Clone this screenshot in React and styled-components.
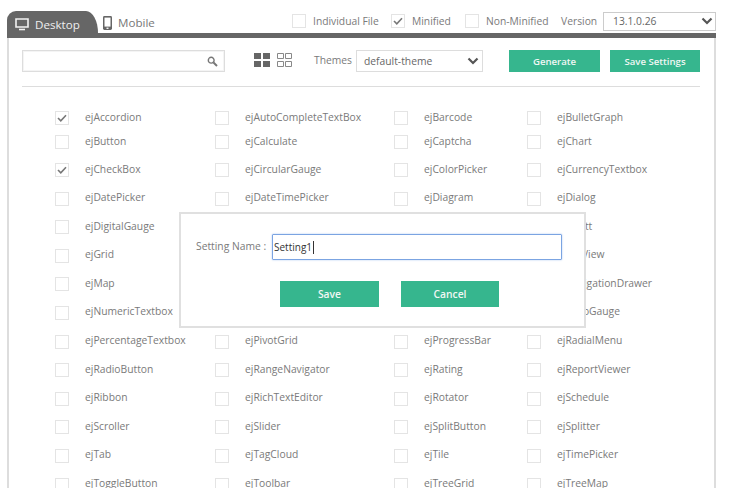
import React from "react";
import styled, { createGlobalStyle } from "styled-components";

const Global = createGlobalStyle`
  html, body { margin: 0; padding: 0; background: #fff; }
  body { width: 740px; height: 488px; overflow: hidden; font-family: "Open Sans", "Noto Sans", sans-serif; }
  * { box-sizing: border-box; }
`;
const Page = styled.div`
  position: relative; width: 740px; height: 488px; overflow: hidden;
  padding: 11px 24px 0 7px; color: #7a7a7a;
`;
const TopBar = styled.div`
  display: flex; height: 27px; border-bottom: 5px solid #666; align-items: flex-start;
`;
const ActiveTab = styled.div`
  flex: none; width: 91px; height: 22px; background: #666; color: #eee;
  border-radius: 9px 12px 0 0 / 9px 22px 0 0;
  display: flex; align-items: center; gap: 6px; padding: 4px 0 0 8px; font-size: 11.6px;
`;
const MobileTab = styled.div`
  flex: none; width: 194px; display: flex; align-items: center; gap: 6px; padding: 4px 0 0 5px; font-size: 11.6px; color: #777;
`;
const Options = styled.div`
  display: flex; align-items: center; margin-top: -1px; font-size: 10.3px; flex: 1; height: 22px;
`;
const Check = styled.span`
  width: 14px; height: 14px; border: 1px solid #e4e4e4; background: #fff; flex: none;
  display: inline-flex; align-items: center; justify-content: center;
`;
const OptLabel = styled.span`
  flex: none; width: ${p => p.$w}px; margin-left: 7px; white-space: nowrap;
`;
const VersionLabel = styled.span` flex: none; width: 34px; `;
const VersionSelect = styled.div`
  flex: none; width: 113px; height: 19px; border: 1px solid #ccc; display: flex; align-items: center;
  justify-content: space-between; padding: 0 1px 0 9px; color: #666; font-size: 10.3px; margin-left: 8px;
`;
const Body = styled.div`
  height: 500px; border-left: 2px solid #ddd; border-right: 2px solid #ddd; padding: 12px 14px 0 13px;
`;
const Tools = styled.div`
  display: flex; align-items: flex-start; height: 37px; border-bottom: 1px solid #ddd; font-size: 10.3px;
`;
const Search = styled.div`
  flex: none; width: 203px; height: 22px; border: 1px solid #ddd; box-shadow: inset 0 0 0 1px #f4f4f4;
  display: flex; align-items: center; justify-content: flex-end; padding-right: 6px;
`;
const ViewIcons = styled.div` flex: none; display: flex; gap: 7px; margin: 3px 22px 0 29px; `;
const ThemesLabel = styled.span` flex: none; width: 42px; line-height: 20px; `;
const ThemeSelect = styled(VersionSelect)`
  width: 127px; height: 22px; margin-left: 0; border: 1px solid #ddd; padding: 0 2px 0 7px;
`;
const GreenButton = styled.button`
  flex: none; width: ${p => p.$w}px; height: ${p => p.$h || 22}px; background: #36b68e; border: 0;
  color: #f0f7f4; font: 600 ${p => p.$size || 9.6}px "Open Sans", sans-serif;
  margin-left: ${p => p.$ml || 0}px; padding: 0;
`;
const Grid = styled.div`
  display: grid; grid-template-columns: 160px 179px 133px 1fr;
  grid-template-rows: 24px 28px repeat(12, 28.6px);
  padding: 21px 0 0 33px; font-size: 10.3px;
`;
const Item = styled.div`
  display: flex; align-items: center; gap: 16px; height: 20px; white-space: nowrap;
`;
const ItemLabel = styled.span` padding-bottom: 3px; `;
const Dialog = styled.div`
  position: absolute; left: 179px; top: 212px; width: 407px; height: 116px;
  background: #fff; border: 2px solid #e0e0e0; padding: 20px 0 0 15px; font-size: 10.3px;
`;
const NameRow = styled.div` display: flex; align-items: center; `;
const NameLabel = styled.span` width: 76px; flex: none; white-space: nowrap; padding-bottom: 2px; `;
const NameInput = styled.div`
  flex: none; width: 290px; height: 26px; border: 1px solid #7ba4e2; border-radius: 1px; box-shadow: 0 0 2px #a9c5ee;
  color: #333; padding-left: 1px; display: flex; align-items: center; font-size: 10px;
`;
const Caret = styled.span` width: 1px; height: 13px; background: #333; margin-left: 1px; `;
const DialogActions = styled.div` display: flex; gap: 22px; margin: 21px 0 0 84px; `;

const Tick = () => (
  <svg width="10" height="8" viewBox="0 0 10 8"><path d="M1 4l2.8 2.8L9 1.2" fill="none" stroke="#777" strokeWidth="1.6" /></svg>
);
const Chevron = () => (
  <svg width="14" height="10" viewBox="0 0 14 10"><path d="M2.5 2.5L7 7l4.5-4.5" fill="none" stroke="#555" strokeWidth="2.2" /></svg>
);
const rows = [
  ["ejAccordion", "ejAutoCompleteTextBox", "ejBarcode", "ejBulletGraph"],
  ["ejButton", "ejCalculate", "ejCaptcha", "ejChart"],
  ["ejCheckBox", "ejCircularGauge", "ejColorPicker", "ejCurrencyTextbox"],
  ["ejDatePicker", "ejDateTimePicker", "ejDiagram", "ejDialog"],
  ["ejDigitalGauge", "ejDocumentViewer", "ejDropDownList", "ejGantt"],
  ["ejGrid", "ejGroupButton", "ejLinearGauge", "ejListView"],
  ["ejMap", "ejMaskEdit", "ejMenu", "ejNavigationDrawer"],
  ["ejNumericTextbox", "ejOverview", "ejPager", "ejPagoGauge"],
  ["ejPercentageTextbox", "ejPivotGrid", "ejProgressBar", "ejRadialMenu"],
  ["ejRadioButton", "ejRangeNavigator", "ejRating", "ejReportViewer"],
  ["ejRibbon", "ejRichTextEditor", "ejRotator", "ejSchedule"],
  ["ejScroller", "ejSlider", "ejSplitButton", "ejSplitter"],
  ["ejTab", "ejTagCloud", "ejTile", "ejTimePicker"],
  ["ejToggleButton", "ejToolbar", "ejTreeGrid", "ejTreeMap"],
];
const checked = new Set(["ejAccordion", "ejCheckBox"]);

export default function App() {
  return (
    <Page>
      <Global />
      <TopBar>
        <ActiveTab>
          <svg width="14" height="13" viewBox="0 0 14 13"><path d="M1 1h12v8H1z" fill="none" stroke="#f2f2f2" strokeWidth="1.6" /><path d="M4 11.5h6" stroke="#f2f2f2" strokeWidth="1.6" /></svg>
          Desktop
        </ActiveTab>
        <MobileTab>
          <svg width="9" height="14" viewBox="0 0 9 14"><rect x="0" y="0" width="9" height="14" rx="1.4" fill="#666" /><rect x="1.5" y="1.6" width="6" height="9" fill="#fff" /><rect x="3.5" y="11.6" width="2" height="1.3" fill="#fff" /></svg>
          Mobile
        </MobileTab>
        <Options>
          <Check />
          <OptLabel $w={78}>Individual File</OptLabel>
          <Check><Tick /></Check>
          <OptLabel $w={53}>Minified</OptLabel>
          <Check />
          <OptLabel $w={75}>Non-Minified</OptLabel>
          <VersionLabel>Version</VersionLabel>
          <VersionSelect>13.1.0.26<Chevron /></VersionSelect>
        </Options>
      </TopBar>
      <Body>
        <Tools>
          <Search>
            <svg width="11" height="11" viewBox="0 0 11 11"><circle cx="4.2" cy="4.2" r="2.9" fill="none" stroke="#777" strokeWidth="1.4" /><path d="M6.5 6.5L10 10" stroke="#777" strokeWidth="2" /></svg>
          </Search>
          <ViewIcons>
            <svg width="16" height="14" viewBox="0 0 16 14"><path d="M0 0h7v6H0zM9 0h7v6H9zM0 8h7v6H0zM9 8h7v6H9z" fill="#666" /></svg>
            <svg width="15" height="14" viewBox="0 0 15 14"><path d="M.5.5h6v5h-6zM8.5.5h6v5h-6zM.5 8.5h6v5h-6zM8.5 8.5h6v5h-6z" fill="none" stroke="#888" /></svg>
          </ViewIcons>
          <ThemesLabel>Themes</ThemesLabel>
          <ThemeSelect>default-theme<Chevron /></ThemeSelect>
          <GreenButton $w={91} $ml={26}>Generate</GreenButton>
          <GreenButton $w={90} $ml={10}>Save Settings</GreenButton>
        </Tools>
        <Grid>
          {rows.flatMap(row => row.map(name => (
            <Item key={name}>
              <Check>{checked.has(name) && <Tick />}</Check>
              <ItemLabel>{name}</ItemLabel>
            </Item>
          )))}
        </Grid>
      </Body>
      <Dialog>
        <NameRow>
          <NameLabel>Setting Name :</NameLabel>
          <NameInput>Setting1<Caret /></NameInput>
        </NameRow>
        <DialogActions>
          <GreenButton $w={99} $h={26} $size={10.3}>Save</GreenButton>
          <GreenButton $w={98} $h={26} $size={10.3}>Cancel</GreenButton>
        </DialogActions>
      </Dialog>
    </Page>
  );
}
